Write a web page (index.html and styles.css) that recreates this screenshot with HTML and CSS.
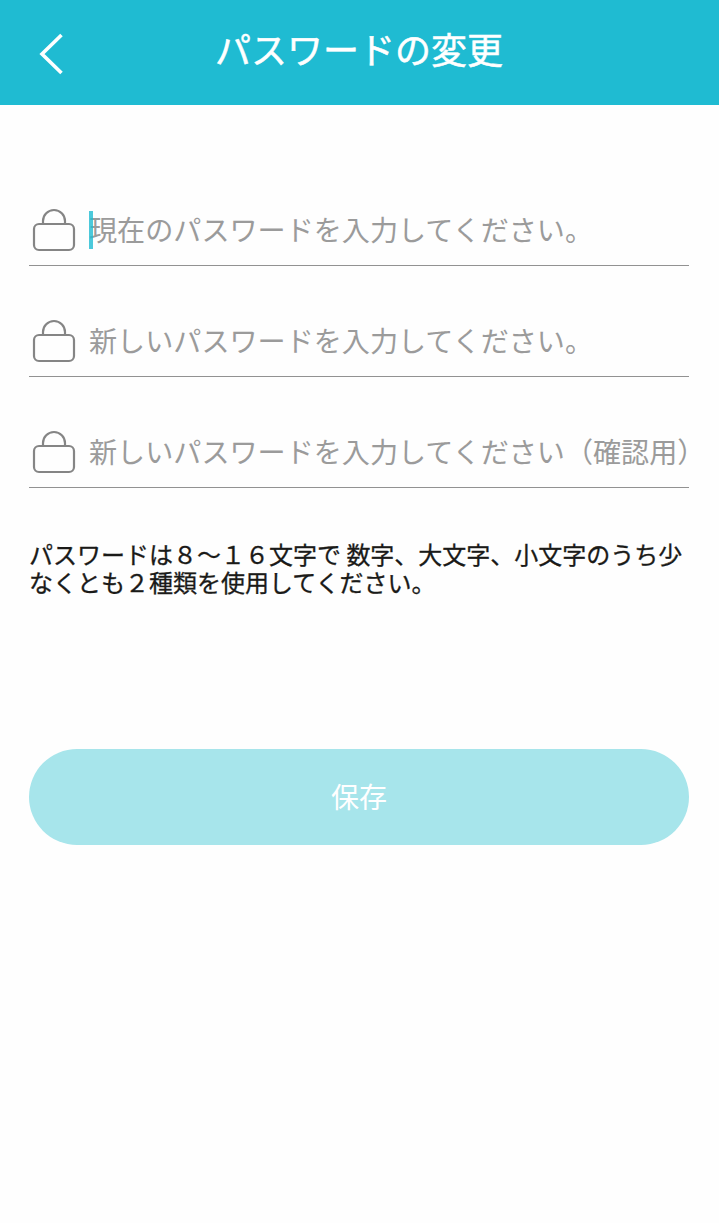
FILE: index.html
```html
<!DOCTYPE html>
<html lang="ja">
<head>
  <meta charset="UTF-8">
  <meta name="viewport" content="width=device-width, initial-scale=1.0">
  <title>パスワードの変更</title>
  <link rel="stylesheet" href="styles.css">
</head>
<body>
  <header class="header">
    <a class="back" href="#" aria-label="戻る">
      <svg width="24" height="42" viewBox="0 0 24 42">
        <path d="M22.5 2 L3 21 L22.5 40" />
      </svg>
    </a>
    <h1>パスワードの変更</h1>
  </header>

  <main>
    <form class="password-form">
      <div class="field focused">
        <svg class="lock" width="44" height="44" viewBox="0 0 44 44">
          <path d="M11 15.5 V13 A11 11 0 0 1 33 13 V15.5" />
          <rect x="2" y="16" width="40" height="26" rx="5" />
        </svg>
        <input type="password" placeholder="現在のパスワードを入力してください。">
      </div>

      <div class="field">
        <svg class="lock" width="44" height="44" viewBox="0 0 44 44">
          <path d="M11 15.5 V13 A11 11 0 0 1 33 13 V15.5" />
          <rect x="2" y="16" width="40" height="26" rx="5" />
        </svg>
        <input type="password" placeholder="新しいパスワードを入力してください。">
      </div>

      <div class="field">
        <svg class="lock" width="44" height="44" viewBox="0 0 44 44">
          <path d="M11 15.5 V13 A11 11 0 0 1 33 13 V15.5" />
          <rect x="2" y="16" width="40" height="26" rx="5" />
        </svg>
        <input type="password" placeholder="新しいパスワードを入力してください（確認用）">
      </div>

      <p class="note">パスワードは８～１６文字で 数字、大文字、小文字のうち少なくとも２種類を使用してください。</p>

      <button class="save" type="submit" disabled>保存</button>
    </form>
  </main>
</body>
</html>
```

FILE: styles.css
```css
* {
  margin: 0;
  padding: 0;
  box-sizing: border-box;
}

body {
  font-family: "Noto Sans CJK JP", sans-serif;
  background-color: #fefefe;
  color: #1a1a18;
}

/* Header */
.header {
  display: grid;
  grid-template-columns: 100px 1fr 101px;
  height: 105px;
  background-color: #1fbbd2;
  color: #fff;
}

.back {
  padding: 33px 0 0 39px;
}

.back svg {
  display: block;
  fill: none;
  stroke: #fff;
  stroke-width: 3.6;
}

.header h1 {
  font-size: 36px;
  font-weight: 400;
  line-height: 96px;
  text-align: center;
  white-space: nowrap;
  -webkit-text-stroke: 0.5px #fff;
}

/* Form */
.password-form {
  padding: 50px 30px 0 29px;
}

.field {
  position: relative;
  display: flex;
  align-items: flex-end;
  height: 111px;
  padding: 0 0 13px 3px;
  border-bottom: 1px solid #929292;
}

.lock {
  flex: none;
  margin-right: 13px;
  fill: none;
  stroke: #858585;
  stroke-width: 2.2;
}

.field input {
  flex: 1;
  min-width: 0;
  height: 44px;
  padding-bottom: 4px;
  border: none;
  outline: none;
  background: transparent;
  font-family: inherit;
  font-size: 28.1px;
}

.field input::placeholder {
  color: #9b9b9b;
  opacity: 1;
}

/* Text cursor */
.focused::after {
  content: "";
  position: absolute;
  left: 60px;
  bottom: 16px;
  width: 4px;
  height: 38px;
  background-color: #1fbbd2;
  opacity: 0.8;
}

.note {
  margin-top: 52px;
  font-size: 24px;
  line-height: 28px;
  -webkit-text-stroke: 0.3px #1a1a18;
}

.save {
  display: block;
  width: 100%;
  height: 96px;
  margin-top: 153px;
  padding-bottom: 2px;
  border: none;
  border-radius: 48px;
  background-color: #a7e5eb;
  color: #fff;
  font-family: inherit;
  font-size: 28px;
}
```
